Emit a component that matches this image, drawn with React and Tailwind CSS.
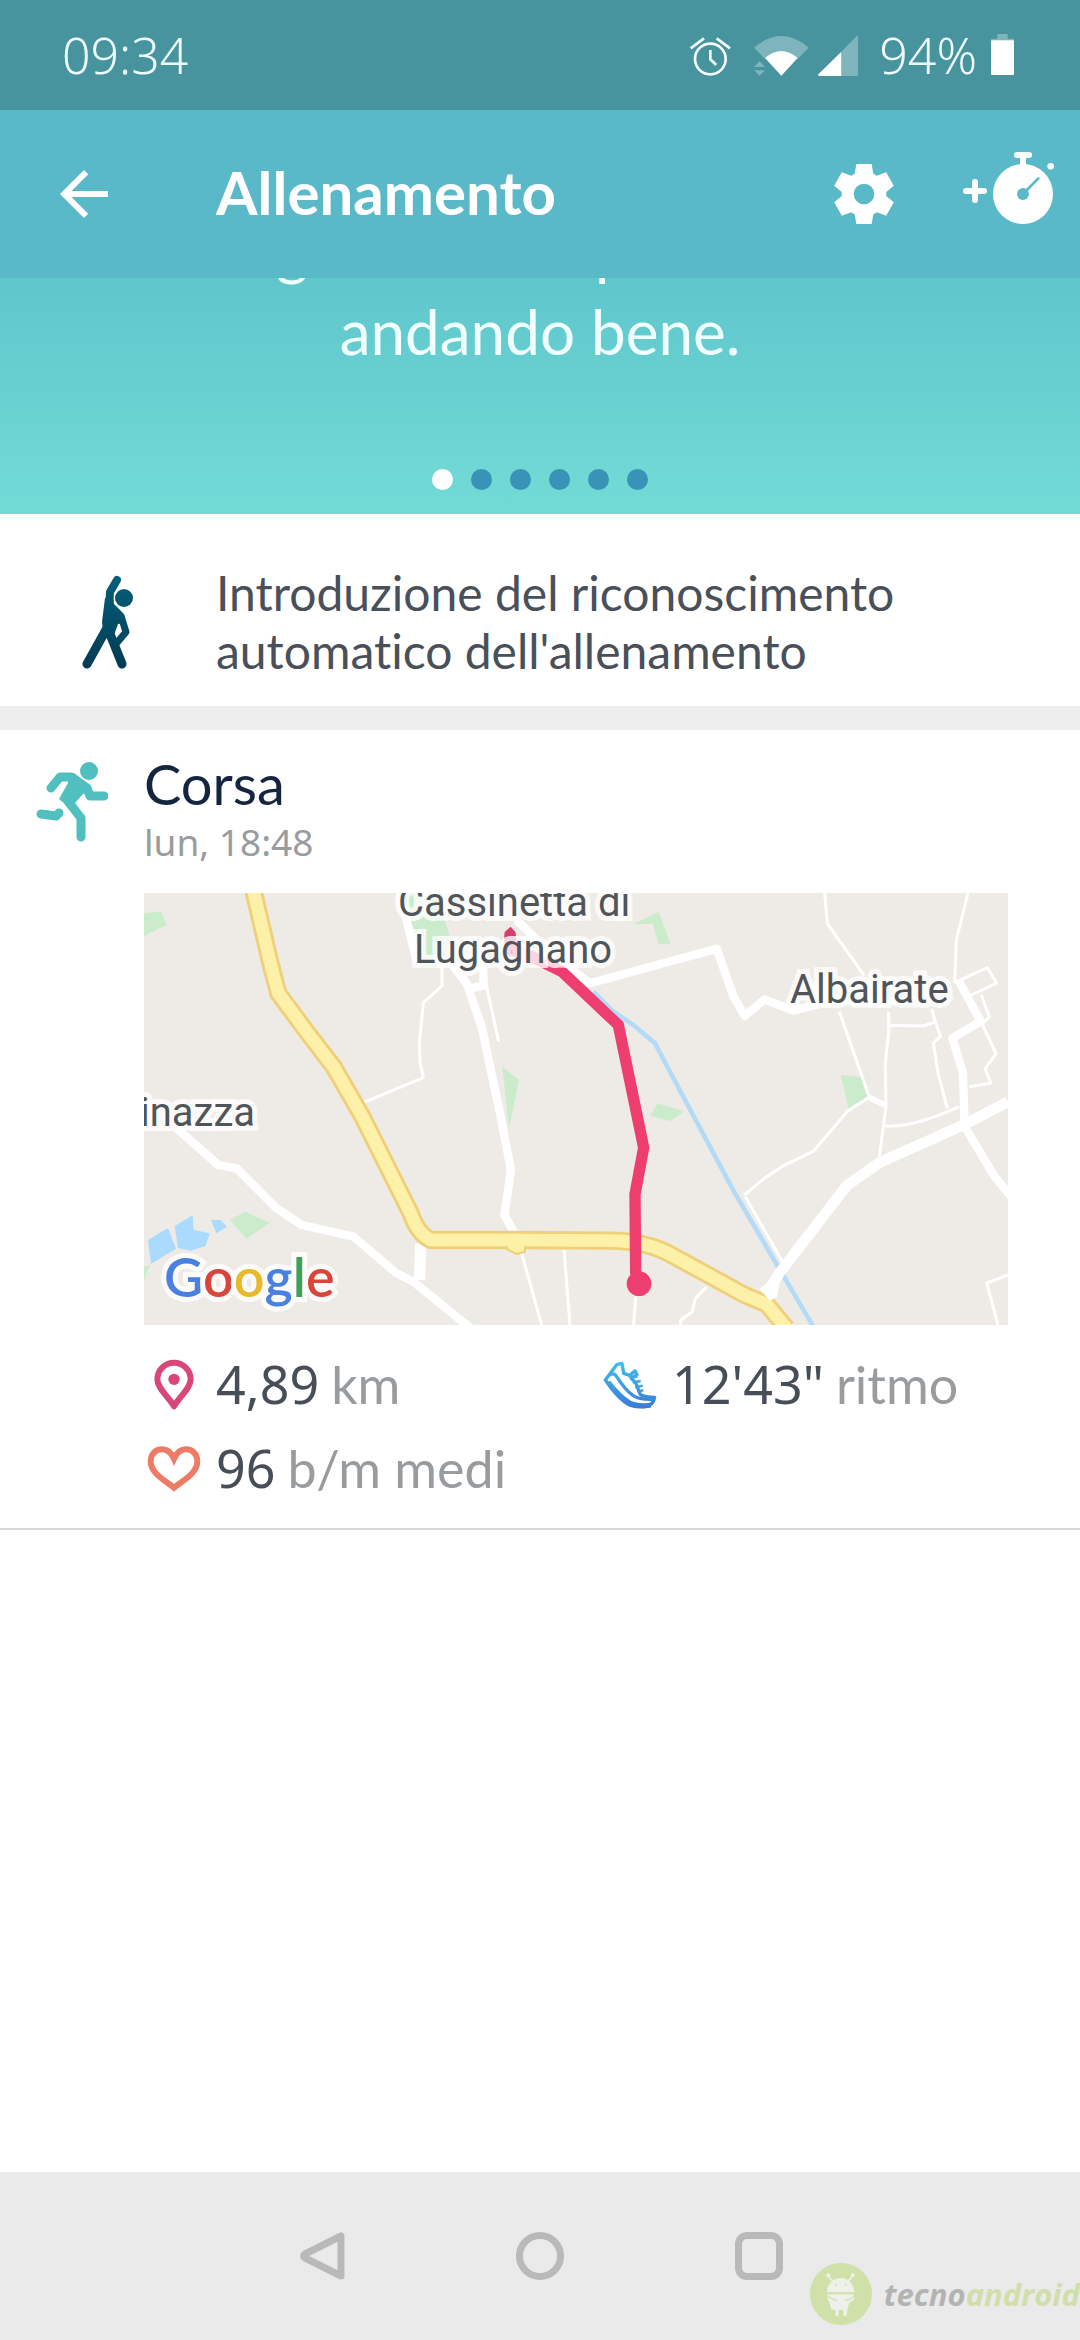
import { MdArrowBack } from 'react-icons/md';

const SLIDES = [0, 1, 2, 3, 4, 5];

const GEAR_TEETH = [
  'rotate(0)', 'rotate(60)', 'rotate(120)', 'rotate(180)', 'rotate(240)', 'rotate(300)',
];

const HIGHWAY = 'M340 30l50 215 25 95 85 115 82 107 85 148 75 150 70 140q20 60 60 80h258l280 2q110 0 190 46l110 60 100 55 70 30 60 72';

const LOGO = [
  { char: 'G', color: 'text-[#4a80e0]' },
  { char: 'o', color: 'text-[#d8453a]' },
  { char: 'o', color: 'text-[#e8b92a]' },
  { char: 'g', color: 'text-[#4a80e0]' },
  { char: 'l', color: 'text-[#41a058]' },
  { char: 'e', color: 'text-[#d8453a]' },
];

function StatusBar() {
  return (
    <div className="flex h-[110px] items-center bg-[#47949e] pl-[62px] pr-16 font-['Noto_Sans',sans-serif] text-[50px] leading-[60px] font-light text-[#effcff]">
      <span className="mr-auto">09:34</span>
      <svg className="mr-[22px] h-11 w-[42px]" viewBox="150 99 126 132" fill="none" stroke="#f4feff" strokeWidth="8">
        <circle cx="214" cy="177" r="46" />
        <path d="M214 150v28l18 17M155 145l40-30M273 145l-40-30" />
      </svg>
      <svg className="mr-2 h-11 w-14" viewBox="342 99 168 132" fill="#fff">
        <path opacity=".3" d="M345 143Q427 73 509 143L476 177Q427 130 378 177Z" />
        <path d="M378 174Q427 132 476 174L427 227Z" />
        <path opacity=".3" d="M345 201l17-18 16 18zM345 211h33l-16 16z" />
      </svg>
      <svg className="mr-5 h-11 w-[42px]" viewBox="531 99 126 132" fill="#fff">
        <path opacity=".3" d="M604 155l46-47q4-2 4 3v113q0 4-4 4h-46z" />
        <path d="M604 155v73h-66q-6-1-3-5z" />
      </svg>
      <span>94%</span>
      <svg className="ml-3 h-11 w-[27px]" viewBox="1050 99 81 132" fill="#fff">
        <path opacity=".3" d="M1075 102h31v14h19v6h-69v-6h19z" />
        <rect x="1056" y="121" width="69" height="104" rx="3" />
      </svg>
    </div>
  );
}

function AppBar() {
  return (
    <header className="flex h-[168px] items-center bg-[#5ab9c8] pl-12 pr-6 text-white">
      <button aria-label="Indietro">
        <MdArrowBack className="size-[72px]" />
      </button>
      <h1 className="ml-24 mr-auto pb-1 text-[60px] leading-[72px] font-bold">Allenamento</h1>
      <button aria-label="Impostazioni" className="mr-16">
        <svg className="size-16" viewBox="-96 -96 192 192" fill="currentColor">
          <circle r="49" fill="none" stroke="currentColor" strokeWidth="36" />
          {GEAR_TEETH.map(t => (
            <path key={t} transform={t} d="M-23-90h46l7 42h-60z" />
          ))}
        </svg>
      </button>
      <button aria-label="Aggiungi allenamento">
        <svg className="h-[88px] w-24" viewBox="960 450 288 264" fill="none" stroke="currentColor" strokeWidth="18" strokeLinecap="round">
          <path d="M978 573h54M1005 546v54M1131 465h36M1149 465v40" />
          <circle cx="1149" cy="582" r="90" fill="currentColor" stroke="none" />
          <circle cx="1232" cy="499" r="10" fill="currentColor" stroke="none" />
          <circle cx="1149" cy="582" r="18" fill="#5ab9c8" stroke="none" />
          <path d="M1149 582l46-47" stroke="#5ab9c8" strokeWidth="8" />
        </svg>
      </button>
    </header>
  );
}

function Hero() {
  return (
    <section className="flex h-[236px] flex-col justify-end overflow-hidden bg-linear-to-b from-[#5fc6cc] to-[#73dbd6] pb-6">
      <p className="shrink-0 text-center text-[62px] leading-[82px] text-[#f0ffff]">
        Segui come si può fare e<br />andando bene.
      </p>
      <div className="mt-[97px] flex shrink-0 justify-center gap-[18px]">
        {SLIDES.map(i => (
          <span key={i} className={`size-[21px] rounded-full ${i === 0 ? 'bg-white' : 'bg-[#3993b8]'}`} />
        ))}
      </div>
    </section>
  );
}

function IntroRow() {
  return (
    <a href="#riconoscimento" className="flex items-center gap-[72px] pt-[50px] pb-[26px] pl-[72px]">
      <svg className="h-24 w-[72px] shrink-0" viewBox="72 34 72 96" fill="none" stroke="url(#stretch)" strokeWidth="8" strokeLinecap="round" strokeLinejoin="round">
        <defs>
          <linearGradient id="stretch" gradientUnits="userSpaceOnUse" x1="0" y1="36" x2="0" y2="128">
            <stop offset="0" stopColor="#04607a" />
            <stop offset="1" stopColor="#033a54" />
          </linearGradient>
        </defs>
        <circle cx="124" cy="58" r="9" fill="url(#stretch)" stroke="none" />
        <path d="M117 40l-7 12-1 18" />
        <path d="M105 58h8l1 6 8 8q4 4 3 11l-7 1-5 14h-9l-2-16z" fill="url(#stretch)" stroke="none" />
        <path d="M107 88L87 124M110 94l12 30" strokeWidth="9" />
        <path d="M121 76l5 16-11 13" strokeWidth="7" />
      </svg>
      <span className="text-[48px] leading-[58px] text-[#49505a] [font-variant-ligatures:none]">
        Introduzione del riconoscimento<br />automatico dell'allenamento
      </span>
    </a>
  );
}

function RunnerIcon() {
  return (
    <svg className="mt-1.5 h-[84px] w-[72px] shrink-0" viewBox="36 220 72 84" fill="none" stroke="#50bfbf" strokeWidth="9" strokeLinecap="round" strokeLinejoin="round">
      <circle cx="89" cy="231" r="9" fill="#50bfbf" stroke="none" />
      <path d="M51 248l9-11h11l16 11 3 8h14" />
      <path d="M68 234l6-1 17 13 1 5-9 3-8 9q-9 3-16-4l9-16z" fill="#50bfbf" stroke="none" />
      <path d="M67 260l14 18v19" />
      <path d="M41 274l15 2 3-3" />
    </svg>
  );
}

function RouteMap() {
  return (
    <div className="relative overflow-hidden bg-[#eeebe7] font-[Roboto,sans-serif] text-[40px] leading-[47px] text-[#50555a]">
      <svg className="block w-full" viewBox="12 39 2592 1296" fill="none" strokeLinejoin="round">
        {/* parks */}
        <g fill="#cbeccb">
          <path d="M12 100l50-6 18 40-68 34z" />
          <path d="M775 39h110l30 85 20 60-40 80h-50l-25-120z" />
          <path d="M1087 560l50 40-30 145z" />
          <path d="M270 1020l45-25 75 33-70 48z" />
          <path d="M12 1160l18-4-18 45z" />
          <path d="M1478 133l78-37 36 95-36 2-18-62z" />
          <path d="M1552 670l80 24-42 30-60-16z" />
          <path d="M2102 585l66 7 16 62-58 32z" />
        </g>
        {/* water */}
        <g fill="#aadafe">
          <path d="M24 1080l60-36 24 62-75 46z" />
          <path d="M104 1038l54-32 3 44 48 10-12 38-45 14-38-8z" />
          <path d="M213 1020h28l20 20-32 20z" />
        </g>
        <path d="M1360 335l60 60 60 40 65 55 90 170 150 280 235 400" stroke="#b3dbf7" strokeWidth="14" />
        {/* minor streets */}
        <g stroke="#fff" strokeWidth="9">
          <path d="M906 260v58l-56 50-12 120 2 60 10 45-180 75" />
          <path d="M1030 260l12 70 34 155M1145 1120l60 215M1272 1110l18 225M1487 1250l-6 85M1700 1220l-34 36-10 40-34 24v20" />
          <path d="M2054 39l8 92 110 155M2098 395l90 257-64 40-104 122-88 42-60 40-60 50" />
          <path d="M2484 39l-35 140-5 130M2444 308l98-45 28 46-84 40M2524 345l24 66-22 20 42 90-33 46 18 42-66 12" />
          <path d="M2246 395v60l-10 95 2 130-20 150M2250 436l100 2 36-12-10-35 26 82M2402 470l-22 18 14 90 28 108M2236 738q80 6 222-58" />
          <path d="M2604 1185l-64 24 34 126M1816 950l114 200" />
        </g>
        <path d="M2188 652l48 24" stroke="#fff" strokeWidth="18" />
        {/* main streets */}
        <g stroke="#fff" strokeWidth="25">
          <path d="M780 39l50 205M925 240l55 70 45 130 55 260 33 170-20 135 45 80M990 325l40-8v-80" />
          <path d="M110 745l125 110 55 10 120 120 75 50 155 35 130 110 50 25 185 150" />
          <path d="M842 1090l-3 110" strokeWidth="34" />
          <path d="M1130 120l100 100 120 90 380-104 50 142 34 60 60-50 86 34 120-30h220" />
          <path d="M2604 665l-138 72-246 110-100 70-200 260-60 90" strokeWidth="32" />
          <path d="M2474 740l90 150 50 60M2474 740l-5-160-32-106 85-50-65-120" />
        </g>
        {/* highway */}
        <path d={HIGHWAY} stroke="#efd078" strokeWidth="55" />
        <path d="M1105 1060h50v55l-25 7-30-15z" fill="#fdf0a8" stroke="#efd078" strokeWidth="6" />
        <path d={HIGHWAY} stroke="#fdf0a8" strokeWidth="38" />
        <path d="M1858 1226l68-48-16 74-20 10z" fill="#fff" />
        {/* recorded route */}
        <path d="M1110 160l6 50 60 20 90 45 169 160 76 368-26 140 2 240" stroke="#ee3e70" strokeWidth="34" strokeLinejoin="miter" />
        <path d="M1094 156l18-16 14 16v50h-34z" fill="#d93c6e" />
        <circle cx="1497" cy="1211" r="37" fill="#ee3e70" />
      </svg>
      <span className="absolute left-[254px] -top-[14px] whitespace-nowrap [paint-order:stroke] [-webkit-text-stroke:10px_#ffffffcc]">Cassinetta di</span>
      <span className="absolute left-[270px] top-[33px] [paint-order:stroke] [-webkit-text-stroke:10px_#ffffffcc]">Lugagnano</span>
      <span className="absolute left-[646px] top-[73px] [paint-order:stroke] [-webkit-text-stroke:10px_#ffffffcc]">Albairate</span>
      <span className="absolute -left-1 top-[196px] [paint-order:stroke] [-webkit-text-stroke:10px_#ffffffcc]">inazza</span>
      <span className="absolute bottom-4 left-5 font-[Lato,sans-serif] text-[54px] leading-[64px] font-semibold [paint-order:stroke] [-webkit-text-stroke:10px_#ffffffcc]">
        {LOGO.map((l, i) => (
          <span key={i} className={l.color}>{l.char}</span>
        ))}
      </span>
    </div>
  );
}

function PinIcon() {
  return (
    <svg className="size-15" viewBox="42 42 180 180" fill="none" stroke="#da4675" strokeWidth="18" strokeLinejoin="round">
      <path d="M132 199C118 172 82 146 82 118a50 50 0 0 1 100 0C182 146 146 172 132 199z" />
      <circle cx="132" cy="118" r="17" fill="#da4675" stroke="none" />
    </svg>
  );
}

function HeartIcon() {
  return (
    <svg className="size-15" viewBox="42 294 180 180" fill="none" stroke="#ee7b66" strokeWidth="18">
      <path d="M132 443C110 424 62 402 62 364c0-22 15-36 34-36 16 0 28 10 36 28 8-18 20-28 36-28 19 0 34 14 34 36 0 38-48 60-70 79z" />
    </svg>
  );
}

function ShoeIcon() {
  return (
    <svg className="size-15" viewBox="90 42 180 180" fill="none" stroke="url(#shoe)" strokeWidth="10" strokeLinejoin="round">
      <defs>
        <linearGradient id="shoe" gradientUnits="userSpaceOnUse" x1="0" y1="65" x2="0" y2="205">
          <stop offset="0" stopColor="#3fc0ec" />
          <stop offset="1" stopColor="#3b7bd8" />
        </linearGradient>
      </defs>
      <path d="M106 120l34-46 16-4 5 30 18 6 16-14 6 12-18 10 14 14 14 36q16 8 43 8-4 24-28 28-40 4-62-14-28-22-58-66z" />
      <path d="M118 106q14-10 22 4 26 40 46 54 18 16 66 14" />
      <path d="M114 126q36 46 64 62 24 12 64 8" strokeWidth="15" />
      <path d="M180 115l22-6M188 128l24-5M196 142l22-5M202 154l18-3" strokeWidth="7" />
    </svg>
  );
}

const STATS = [
  { Icon: PinIcon, value: '4,89', unit: 'km' },
  { Icon: ShoeIcon, value: '12\'43"', unit: 'ritmo' },
  { Icon: HeartIcon, value: '96', unit: 'b/m medi' },
];

function Activity() {
  return (
    <section className="flex gap-9 border-b-2 border-[#d8dadb] pt-6 pr-[72px] pb-[18px] pl-9">
      <RunnerIcon />
      <div className="min-w-0 flex-1">
        <h2 className="text-[56px] leading-[60px] text-[#16253f]">Corsa</h2>
        <p className="mb-6 font-['Noto_Sans',sans-serif] text-[37px] leading-[55px] text-[#999c9f]">lun, 18:48</p>
        <RouteMap />
        <dl className="mt-[17px] grid grid-cols-[19fr_17fr] text-[52px] leading-[84px]">
          {STATS.map(({ Icon, value, unit }) => (
            <div key={unit} className="flex items-center gap-3">
              <Icon />
              <dd className="font-['Noto_Sans',sans-serif] text-[#474e58]">{value}</dd>
              <dt className="text-[#999c9f]">{unit}</dt>
            </div>
          ))}
        </dl>
      </div>
    </section>
  );
}

function NavBar() {
  return (
    <nav className="relative mt-auto flex h-[168px] items-center justify-center gap-[171px] overflow-hidden bg-[#eaeaea] text-[#b9b9b9]">
      <button aria-label="Indietro" className="size-12">
        <svg viewBox="0 0 48 48" fill="none" stroke="currentColor" strokeWidth="7" strokeLinejoin="round">
          <path d="M44 4v40L8 26q-3-2 0-4z" />
        </svg>
      </button>
      <button aria-label="Home" className="size-12 rounded-full border-7 border-current" />
      <button aria-label="Recenti" className="size-12 rounded-xl border-7 border-current" />
      <div className="absolute right-0 bottom-[15px] flex items-center gap-3 font-['Open_Sans',sans-serif] text-[31px] leading-none font-bold italic">
        <svg className="size-[62px]" viewBox="84 309 186 186" fill="#eef1ea">
          <circle cx="177" cy="402" r="93" fill="#cfe0a9" />
          <path d="M135 397a41 43 0 0 1 82 0z" />
          <path d="M136 403h80v12q-2 10-14 12l-6 22-2 18h-10v-18h-14v18h-10v-18h-12l-6-24q-6-4-6-10z" />
          <path d="M138 348l12 14M212 348l-12 14" stroke="#eef1ea" strokeWidth="5" />
          <circle cx="139" cy="346" r="6" />
          <circle cx="212" cy="346" r="6" />
          <path d="M138 408q16 14 28 12M216 408q-16 14-28 12" fill="none" stroke="#cfe0a9" strokeWidth="4" />
          <circle cx="162" cy="374" r="3" fill="#cfe0a9" />
          <circle cx="191" cy="374" r="3" fill="#cfe0a9" />
        </svg>
        <span className="text-[#b3b3b3]">tecno<span className="text-[#d0dfaa]">android</span></span>
      </div>
    </nav>
  );
}

export default function App() {
  return (
    <div className="flex min-h-screen flex-col bg-white font-[Lato,sans-serif]">
      <StatusBar />
      <AppBar />
      <main>
        <Hero />
        <IntroRow />
        <div className="h-6 bg-[#ededed]" />
        <Activity />
      </main>
      <NavBar />
    </div>
  );
}
